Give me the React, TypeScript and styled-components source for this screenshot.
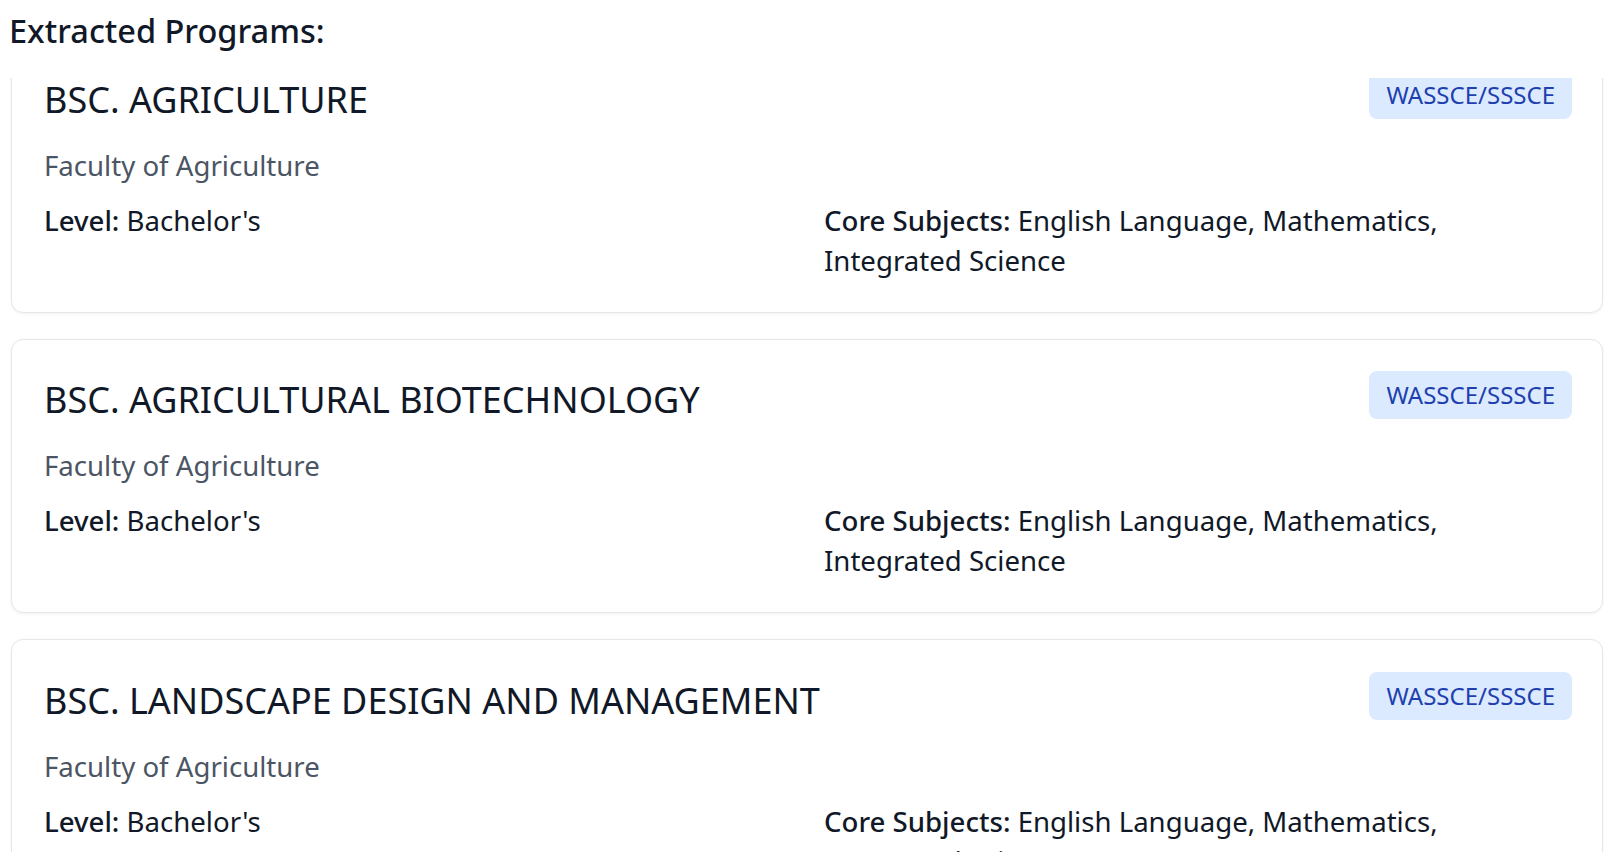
import React, { useLayoutEffect, useRef } from "react";
import styled, { createGlobalStyle } from "styled-components";

type Program = {
    name: string;
    faculty: string;
    level: string;
    exam: string;
    coreSubjects: string[];
};

const programs: Program[] = [
    {
        name: "BSC. AGRICULTURE",
        faculty: "Faculty of Agriculture",
        level: "Bachelor's",
        exam: "WASSCE/SSSCE",
        coreSubjects: ["English Language", "Mathematics", "Integrated Science"]
    },
    {
        name: "BSC. AGRICULTURAL BIOTECHNOLOGY",
        faculty: "Faculty of Agriculture",
        level: "Bachelor's",
        exam: "WASSCE/SSSCE",
        coreSubjects: ["English Language", "Mathematics", "Integrated Science"]
    },
    {
        name: "BSC. LANDSCAPE DESIGN AND MANAGEMENT",
        faculty: "Faculty of Agriculture",
        level: "Bachelor's",
        exam: "WASSCE/SSSCE",
        coreSubjects: ["English Language", "Mathematics", "Integrated Science"]
    }
];

function ProgramCard({ program }: { program: Program }) {
    return (
        <Card>
            <CardHead>
                <Title>{program.name}</Title>
                <Badge>{program.exam}</Badge>
            </CardHead>
            <Faculty>{program.faculty}</Faculty>
            <Details>
                <Detail>
                    <Label>Level:</Label> {program.level}
                </Detail>
                <Detail>
                    <Label>Core Subjects:</Label> {program.coreSubjects.join(", ")}
                </Detail>
            </Details>
        </Card>
    );
}

export default function App() {
    const listRef = useRef<HTMLDivElement>(null);

    // the list is shown part-way scrolled
    useLayoutEffect(() => {
        if (listRef.current) listRef.current.scrollTop = 40;
    }, []);

    return (
        <Page>
            <GlobalStyle />
            <Heading>Extracted Programs:</Heading>
            <List ref={listRef}>
                {programs.map((p) => (
                    <ProgramCard key={p.name} program={p} />
                ))}
            </List>
        </Page>
    );
}

const GlobalStyle = createGlobalStyle`
  html, body {
    margin: 0;
    padding: 0;
    background: #ffffff;
    overflow: hidden;
  }
  body {
    font-family: "Noto Sans", "Open Sans", sans-serif;
    color: #111827;
  }
`;

const Page = styled.div`
    display: flex;
    flex-direction: column;
    height: 852px;
    width: 1604px;
`;

const Heading = styled.h2`
    margin: 0;
    padding: 7px 9px 23px 9px;
    font-size: 32.5px;
    line-height: 48px;
    font-weight: 500;
    color: #111827;
`;

const List = styled.div`
    flex: 1;
    overflow-y: auto;
    padding: 0 1px 0 11px;
    display: flex;
    flex-direction: column;
    gap: 26px;
    scrollbar-width: none;
    &::-webkit-scrollbar {
        display: none;
    }
`;

const Card = styled.div`
    flex-shrink: 0;
    border: 1.5px solid #e5e7eb;
    border-radius: 12px;
    box-shadow: 0 1px 3px rgba(0, 0, 0, 0.06);
    background: #ffffff;
    padding: 31.5px 30px 32px 32px;
`;

const CardHead = styled.div`
    display: flex;
    justify-content: space-between;
    align-items: flex-start;
    gap: 24px;
`;

const Title = styled.h3`
    margin: 0;
    font-size: 36px;
    line-height: 58px;
    font-weight: 400;
    color: #111827;
`;

const Badge = styled.span`
    flex-shrink: 0;
    background: #dbeafe;
    color: #1e40af;
    border-radius: 8px;
    padding: 6px 17px;
    font-size: 24px;
    line-height: 36px;
`;

const Faculty = styled.p`
    margin: 16px 0 0 0;
    font-size: 27.6px;
    line-height: 40px;
    color: #4b5563;
`;

const Details = styled.div`
    display: grid;
    grid-template-columns: 1fr 1fr;
    column-gap: 32px;
    margin-top: 15px;
`;

const Detail = styled.p`
    margin: 0;
    font-size: 27.6px;
    line-height: 40px;
    color: #111827;
`;

const Label = styled.span`
    font-weight: 500;
`;
